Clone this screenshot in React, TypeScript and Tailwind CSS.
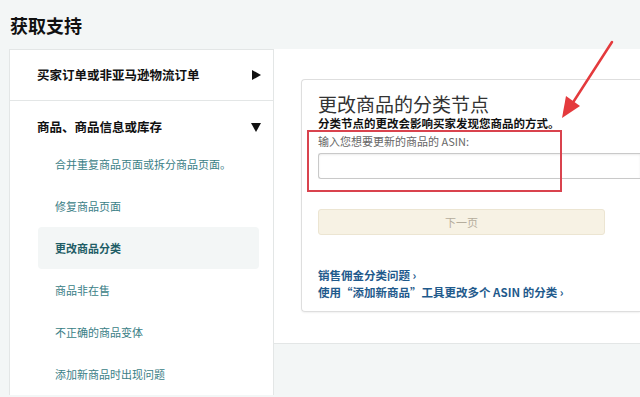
import React from 'react';

const font = { fontFamily: '"Noto Sans CJK SC", "Noto Sans", Arial, sans-serif' };

const subItems = [
  '合并重复商品页面或拆分商品页面。',
  '修复商品页面',
  '更改商品分类',
  '商品非在售',
  '不正确的商品变体',
  '添加新商品时出现问题',
];

const Arrow: React.FC = () => (
  <svg className="absolute left-0 top-0" width="640" height="397" viewBox="0 0 640 397">
    <line x1="612" y1="42" x2="572" y2="104" stroke="#e43a3d" strokeWidth="2.5" strokeLinecap="round" />
    <polygon points="562,118 566,96 580,106" fill="#e43a3d" />
  </svg>
);

const App: React.FC = () => {
  return (
    <div className="relative h-[397px] w-[640px] overflow-hidden bg-[#f3f6f6]" style={font}>
      <div className="flex h-[49px] items-center pl-[10px]">
        <h1 className="text-[18px] font-bold leading-none text-[#111]">获取支持</h1>
      </div>

      <div className="flex">
        <aside className="ml-[9px] w-[265px] shrink-0 border border-b-0 border-[#e3e6e6] bg-white">
          <div className="flex h-[51px] items-center justify-between border-b border-[#e3e6e6] pl-[27px] pr-[12px]">
            <span className="text-[12.5px] font-bold text-[#111]">买家订单或非亚马逊物流订单</span>
            <svg width="9" height="10" viewBox="0 0 9 10">
              <polygon points="0,0 9,5 0,10" fill="#111" />
            </svg>
          </div>
          <div className="flex h-[42px] items-start justify-between pl-[27px] pr-[12px] pt-[17px]">
            <span className="text-[12.5px] font-bold leading-[18px] text-[#111]">商品、商品信息或库存</span>
            <svg className="mt-[5px]" width="10" height="9" viewBox="0 0 10 9">
              <polygon points="0,0 10,0 5,9" fill="#111" />
            </svg>
          </div>
          <ul className="ml-[28px] mr-[14px]">
            {subItems.map((item, i) => (
              <li
                key={item}
                className={`flex h-[42px] items-center rounded-sm px-[17px] text-[11px] ${
                  i === 2 ? 'bg-[#f3f6f6] font-bold text-[#1f5d66]' : 'text-[#3a7e86]'
                }`}
              >
                {item}
              </li>
            ))}
          </ul>
        </aside>

        <main className="flex-1">
          <div className="h-[295px] border-b border-[#e3e6e6] bg-white pl-[27px] pt-[30px]">
            <section className="h-[233px] rounded-l-sm border border-r-0 border-[#dedede] pl-[16px] pt-[12px] shadow-[0_1px_2px_rgba(0,0,0,0.06)]">
              <h2 className="text-[19px] font-normal leading-[24px] text-[#333]">更改商品的分类节点</h2>
              <p className="text-[11.5px] font-bold leading-[15px] text-[#111]">分类节点的更改会影响买家发现您商品的方式。</p>
              <label className="mt-[3px] block text-[11px] leading-[14px] text-[#666]">输入您想要更新的商品的 ASIN:</label>
              <div className="mt-[5px] h-[26px] rounded-l-[3px] border border-r-0 border-[#c9c9c9] bg-white shadow-[inset_0_1px_2px_rgba(0,0,0,0.08)]" />
              <button
                type="button"
                className="mt-[30px] flex h-[26px] w-[287px] items-center justify-center rounded-[3px] border border-[#ece5d2] bg-[#f7f2e4] text-[11px] text-[#b5ad9c]"
              >
                下一页
              </button>
              <div className="mt-[32px] text-[11.5px] font-semibold leading-[17px] text-[#1f5a8c]">
                <p>销售佣金分类问题 ›</p>
                <p>使用“添加新商品”工具更改多个 ASIN 的分类 ›</p>
              </div>
            </section>
          </div>
        </main>
      </div>

      <div className="absolute left-[307px] top-[130px] h-[62px] w-[255px] border-2 border-[#d9434e]" />
      <Arrow />
    </div>
  );
};

export default App;
